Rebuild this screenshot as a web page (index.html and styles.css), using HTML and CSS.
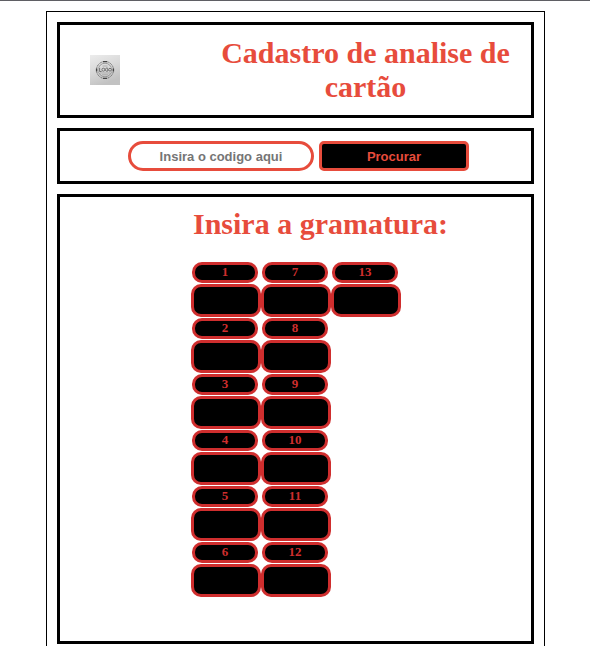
FILE: index.html
```html
<!DOCTYPE html>
<html lang="pt-BR">
<head>
<meta charset="utf-8">
<meta name="viewport" content="width=device-width, initial-scale=1">
<title>Cadastro de analise de cartão</title>
<link rel="stylesheet" href="styles.css">
</head>
<body>
<div class="page">
  <header class="panel header">
    <svg class="logo" viewBox="0 0 30 30" role="img" aria-label="Logo">
      <defs>
        <linearGradient id="paper" x1="0" y1="0" x2="0.4" y2="1">
          <stop offset="0" stop-color="#ececec"/>
          <stop offset="0.5" stop-color="#dadada"/>
          <stop offset="1" stop-color="#c2c2c2"/>
        </linearGradient>
      </defs>
      <rect width="30" height="30" fill="url(#paper)"/>
      <g fill="none" stroke="#666">
        <circle cx="15" cy="15" r="8.5" stroke-width="1" stroke-dasharray="1.2 0.6"/>
        <circle cx="15" cy="15" r="6.8" stroke="#888" stroke-width="0.8"/>
        <path d="M13 6.6h4M13 23.4h4M6.6 13.5v3M23.4 13.5v3" stroke="#444" stroke-width="1.4"/>
        <path d="M12.5 11h5M10 17.9h10M12 19.8h6" stroke="#999" stroke-width="0.7"/>
      </g>
      <rect x="8.5" y="12.4" width="13" height="4.8" fill="#d6d6d6"/>
      <g fill="none" stroke="#666" stroke-width="0.9">
        <path d="M9.6 12.8v3.7h2"/>
        <circle cx="13.4" cy="14.7" r="1.5"/>
        <path d="M18 13.5a1.6 1.6 0 1 0 0 2.3v-1h-1"/>
        <circle cx="20" cy="14.7" r="1.4"/>
      </g>
    </svg>
    <h1 class="title">Cadastro de analise de cartão</h1>
  </header>

  <form class="panel search">
    <input class="code" type="text" placeholder="Insira o codigo aqui" aria-label="Codigo">
    <button class="submit" type="button">Procurar</button>
  </form>

  <main class="panel weights">
    <h2 class="title">Insira a gramatura:</h2>
    <div class="grid">
      <div class="field"><label for="g1">1</label><input id="g1" type="text"></div>
      <div class="field"><label for="g2">2</label><input id="g2" type="text"></div>
      <div class="field"><label for="g3">3</label><input id="g3" type="text"></div>
      <div class="field"><label for="g4">4</label><input id="g4" type="text"></div>
      <div class="field"><label for="g5">5</label><input id="g5" type="text"></div>
      <div class="field"><label for="g6">6</label><input id="g6" type="text"></div>
      <div class="field"><label for="g7">7</label><input id="g7" type="text"></div>
      <div class="field"><label for="g8">8</label><input id="g8" type="text"></div>
      <div class="field"><label for="g9">9</label><input id="g9" type="text"></div>
      <div class="field"><label for="g10">10</label><input id="g10" type="text"></div>
      <div class="field"><label for="g11">11</label><input id="g11" type="text"></div>
      <div class="field"><label for="g12">12</label><input id="g12" type="text"></div>
      <div class="field"><label for="g13">13</label><input id="g13" type="text"></div>
    </div>
  </main>
</div>
</body>
</html>
```
FILE: styles.css
```css
* {
  box-sizing: border-box;
}

body {
  display: flex;
  flex-direction: column;
  min-height: 100vh;
  margin: 0;
  padding: 10px 45px 0 46px;
  border-top: 1px solid #5f5f64;
  background: #fff;
  font-family: "Liberation Serif", "Times New Roman", serif;
}

.page {
  display: flex;
  flex: 1;
  flex-direction: column;
  gap: 10px;
  padding: 10px 10px 2px;
  border: 1px solid #000;
  border-bottom: 0;
}

.panel {
  border: 3px solid #000;
}

.title {
  margin: 0;
  color: #e74c3c;
  font-size: 30px;
  font-weight: bold;
  line-height: 34px;
  text-align: center;
}

.header {
  display: flex;
  align-items: center;
  gap: 80px;
  padding: 11px 0 11px 30px;
}

.logo {
  flex: none;
  width: 30px;
  height: 30px;
}

.header .title {
  flex: 1;
}

.search {
  display: flex;
  justify-content: center;
  gap: 5px;
  padding: 10px 0 10px 6px;
}

.code,
.submit {
  height: 30px;
  border: 3px solid #e74c3c;
  font: bold 13px "Liberation Sans", Arial, sans-serif;
  text-align: center;
}

.code {
  width: 186px;
  border-radius: 15px;
  background: #fff;
}

.code::placeholder {
  color: #757575;
}

.submit {
  width: 150px;
  padding: 0;
  border-radius: 5px;
  background: #000;
  color: #e74c3c;
}

.weights {
  min-height: 450px;
  padding: 10px 0 10px 50px;
}

.grid {
  display: grid;
  grid-template-rows: repeat(6, auto);
  grid-auto-columns: 70px;
  grid-auto-flow: column;
  row-gap: 1px;
  margin: 21px 0 0 81px;
}

.field {
  display: flex;
  flex-direction: column;
  gap: 1px;
}

.field label {
  width: 66px;
  height: 21px;
  margin-left: 1px;
  border: 3px solid #cf2e2e;
  border-radius: 10px;
  background: #000;
  color: #cf2e2e;
  font-size: 13px;
  font-weight: bold;
  line-height: 14px;
  text-align: center;
}

.field input {
  width: 70px;
  height: 33px;
  border: 3px solid #cf2e2e;
  border-radius: 10px;
  background: #000;
  color: #cf2e2e;
  text-align: center;
}
```
